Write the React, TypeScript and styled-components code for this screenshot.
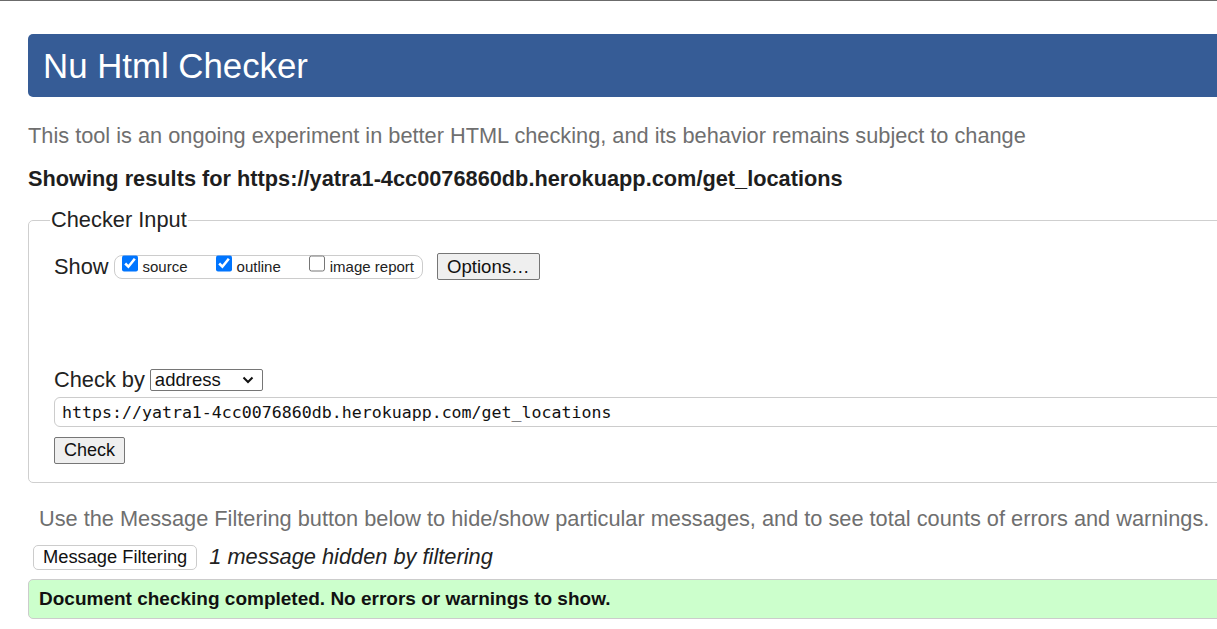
import React from "react";
import styled, { createGlobalStyle } from "styled-components";

const Global = createGlobalStyle`
  html, body { margin: 0; padding: 0; background: #fff; overflow: hidden; }
  * { box-sizing: border-box; }
`;

const Page = styled.div`
  width: 1500px;
  border-top: 1px solid #6b6b6b;
  padding: 33px 0 0 28px;
  font-family: "Liberation Sans", Arial, sans-serif;
  color: #222;
`;

const Banner = styled.h1`
  margin: 0;
  height: 63px;
  line-height: 63px;
  padding-left: 15px;
  background: #365c96;
  color: #fff;
  font-size: 34.8px;
  font-weight: normal;
  border-radius: 5px;
`;

const Note = styled.p<{ $indent?: number; $top: number }>`
  margin: ${(p) => p.$top}px 0 0 ${(p) => p.$indent ?? 0}px;
  font-size: 21.75px;
  line-height: 24px;
  color: #6f6f6f;
  white-space: nowrap;
`;

const Results = styled.h2`
  margin: 19px 0 0;
  font-size: 21.75px;
  line-height: 24px;
  font-weight: bold;
  color: #1e1e1e;
  white-space: nowrap;
`;

const Fieldset = styled.fieldset`
  margin: 17px 0 0;
  padding: 0 0 18px 25px;
  border: 1px solid #cfcfcf;
  border-radius: 5px;
`;

const Legend = styled.legend`
  margin-left: -4px;
  padding: 0 1px;
  font-size: 21.8px;
  line-height: 24px;
  color: #222;
`;

const Row = styled.div<{ $top: number }>`
  display: flex;
  align-items: center;
  margin-top: ${(p) => p.$top}px;
`;

const Label = styled.span`
  font-size: 21.8px;
  line-height: 24px;
  color: #222;
`;

const Group = styled.div`
  display: flex;
  align-items: center;
  height: 24px;
  margin-left: 5px;
  padding: 0 8px 0 7px;
  border: 1px solid #cccccc;
  border-radius: 8px;
`;

const Choice = styled.label<{ $gap: number }>`
  display: flex;
  align-items: center;
  margin-right: ${(p) => p.$gap}px;
  font-size: 15px;
  color: #222;
`;

const Box = styled.input`
  width: 16px;
  height: 17px;
  margin: 0 5px 0 0;
  position: relative;
  top: -3px;
  accent-color: #0075ff;
`;

const Button = styled.button<{ $size: number }>`
  font-family: "Liberation Sans", Arial, sans-serif;
  font-size: ${(p) => p.$size}px;
  color: #111;
  background: #efefef;
  border: 1px solid #767676;
  border-radius: 2px;
  padding: 0 9px;
`;

const OptionsButton = styled(Button)`
  height: 27px;
  margin-left: 14px;
`;

const CheckButton = styled(Button)`
  height: 27px;
`;

const Select = styled.div`
  display: flex;
  align-items: center;
  justify-content: space-between;
  width: 113px;
  height: 22px;
  margin-left: 5px;
  padding: 0 8px 0 4px;
  border: 1px solid #767676;
  border-radius: 2px;
  font-size: 18.5px;
  color: #111;
`;

const UrlField = styled.div`
  height: 30px;
  margin-top: 5px;
  padding-left: 7px;
  display: flex;
  align-items: center;
  border: 1px solid #cccccc;
  border-radius: 6px;
  font-family: "DejaVu Sans Mono", "Liberation Mono", monospace;
  font-size: 16.6px;
  color: #111;
`;

const FilterRow = styled.div`
  display: flex;
  align-items: center;
  margin-top: 13px;
  margin-left: 5px;
`;

const FilterButton = styled.button`
  height: 25px;
  padding: 0 9px;
  font-family: "Liberation Sans", Arial, sans-serif;
  font-size: 18.3px;
  color: #111;
  background: #fff;
  border: 1px solid #cccccc;
  border-radius: 5px;
`;

const Hidden = styled.em`
  margin-left: 12px;
  font-size: 21.8px;
  color: #222;
`;

const Success = styled.div`
  margin-top: 9px;
  height: 40px;
  padding-left: 10px;
  display: flex;
  align-items: center;
  background: #ccffcc;
  border: 1px solid #cccccc;
  border-radius: 5px;
  font-size: 19px;
  font-weight: bold;
  color: #111;
`;

const Chevron = () => (
  <svg width="12" height="8" viewBox="0 0 12 8">
    <path d="M1.5 1.5 L6 6 L10.5 1.5" fill="none" stroke="#111" strokeWidth="2" />
  </svg>
);

export default function App() {
  return (
    <>
      <Global />
      <Page>
        <Banner>Nu Html Checker</Banner>
        <Note $top={27}>This tool is an ongoing experiment in better HTML checking, and its behavior remains subject to change</Note>
        <Results>Showing results for https://yatra1-4cc0076860db.herokuapp.com/get_locations</Results>
        <Fieldset>
          <Legend>Checker Input</Legend>
          <Row $top={21}>
            <Label>Show</Label>
            <Group>
              <Choice $gap={28}>
                <Box type="checkbox" defaultChecked />
                source
              </Choice>
              <Choice $gap={28}>
                <Box type="checkbox" defaultChecked />
                outline
              </Choice>
              <Choice $gap={0}>
                <Box type="checkbox" />
                image report
              </Choice>
            </Group>
            <OptionsButton $size={18.6}>Options…</OptionsButton>
          </Row>
          <Row $top={88}>
            <Label>Check by</Label>
            <Select>
              <span>address</span>
              <Chevron />
            </Select>
          </Row>
          <UrlField>https://yatra1-4cc0076860db.herokuapp.com/get_locations</UrlField>
          <Row $top={10}>
            <CheckButton $size={18}>Check</CheckButton>
          </Row>
        </Fieldset>
        <Note $top={24} $indent={11}>Use the Message Filtering button below to hide/show particular messages, and to see total counts of errors and warnings.</Note>
        <FilterRow>
          <FilterButton>Message Filtering</FilterButton>
          <Hidden>1 message hidden by filtering</Hidden>
        </FilterRow>
        <Success>Document checking completed. No errors or warnings to show.</Success>
      </Page>
    </>
  );
}
